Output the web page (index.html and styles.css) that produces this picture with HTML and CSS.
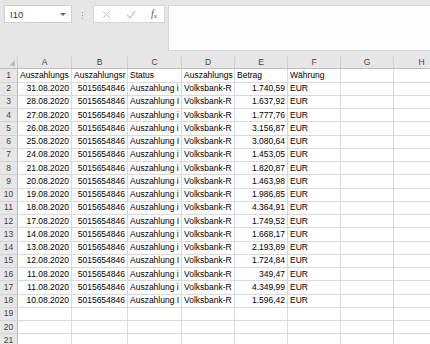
FILE: index.html
```html
<!DOCTYPE html>
<html lang="de">
<head>
  <meta charset="UTF-8">
  <title>Auszahlungen</title>
  <link rel="stylesheet" href="styles.css">
</head>
<body>

<div class="toolbar">
  <div class="namebox">
    <span>I10</span>
    <span class="arrow"></span>
  </div>
  <div class="dots"><i></i><i></i><i></i></div>
  <div class="fxbox">
    <svg class="ico" width="9" height="9" viewBox="0 0 9 9"><path d="M1 1L8 8M8 1L1 8" stroke="#c8c8c8" stroke-width="1" fill="none"/></svg>
    <svg class="ico" width="10" height="9" viewBox="0 0 10 9"><path d="M1 5L4 8L9 1" stroke="#c8c8c8" stroke-width="1.3" fill="none"/></svg>
    <span class="fx">f<sub>x</sub></span>
  </div>
  <div class="formula"></div>
</div>

<div class="grid-wrap">
<table class="sheet">
  <colgroup>
    <col class="c-row"><col class="c-a"><col class="c-b"><col class="c-c"><col class="c-d"><col class="c-e"><col class="c-f"><col class="c-g"><col class="c-h">
  </colgroup>
  <tr class="head">
    <th class="corner"><span class="tri"></span></th><th>A</th><th>B</th><th>C</th><th>D</th><th>E</th><th>F</th><th>G</th><th>H</th>
  </tr>
  <tr><th>1</th><td>Auszahlungs</td><td>Auszahlungsr</td><td>Status</td><td>Auszahlungs</td><td>Betrag</td><td>Währung</td><td></td><td></td></tr>
  <tr><th>2</th><td class="r">31.08.2020</td><td class="r">5015654846</td><td>Auszahlung i</td><td>Volksbank-R</td><td class="r">1.740,59</td><td>EUR</td><td></td><td></td></tr>
  <tr><th>3</th><td class="r">28.08.2020</td><td class="r">5015654846</td><td>Auszahlung I</td><td>Volksbank-R</td><td class="r">1.637,92</td><td>EUR</td><td></td><td></td></tr>
  <tr><th>4</th><td class="r">27.08.2020</td><td class="r">5015654846</td><td>Auszahlung i</td><td>Volksbank-R</td><td class="r">1.777,76</td><td>EUR</td><td></td><td></td></tr>
  <tr><th>5</th><td class="r">26.08.2020</td><td class="r">5015654846</td><td>Auszahlung i</td><td>Volksbank-R</td><td class="r">3.156,87</td><td>EUR</td><td></td><td></td></tr>
  <tr><th>6</th><td class="r">25.08.2020</td><td class="r">5015654846</td><td>Auszahlung I</td><td>Volksbank-R</td><td class="r">3.080,64</td><td>EUR</td><td></td><td></td></tr>
  <tr><th>7</th><td class="r">24.08.2020</td><td class="r">5015654846</td><td>Auszahlung i</td><td>Volksbank-R</td><td class="r">1.453,05</td><td>EUR</td><td></td><td></td></tr>
  <tr><th>8</th><td class="r">21.08.2020</td><td class="r">5015654846</td><td>Auszahlung i</td><td>Volksbank-R</td><td class="r">1.820,87</td><td>EUR</td><td></td><td></td></tr>
  <tr><th>9</th><td class="r">20.08.2020</td><td class="r">5015654846</td><td>Auszahlung i</td><td>Volksbank-R</td><td class="r">1.463,98</td><td>EUR</td><td></td><td></td></tr>
  <tr><th>10</th><td class="r">19.08.2020</td><td class="r">5015654846</td><td>Auszahlung i</td><td>Volksbank-R</td><td class="r">1.986,85</td><td>EUR</td><td></td><td></td></tr>
  <tr><th>11</th><td class="r">18.08.2020</td><td class="r">5015654846</td><td>Auszahlung i</td><td>Volksbank-R</td><td class="r">4.364,91</td><td>EUR</td><td></td><td></td></tr>
  <tr><th>12</th><td class="r">17.08.2020</td><td class="r">5015654846</td><td>Auszahlung I</td><td>Volksbank-R</td><td class="r">1.749,52</td><td>EUR</td><td></td><td></td></tr>
  <tr><th>13</th><td class="r">14.08.2020</td><td class="r">5015654846</td><td>Auszahlung i</td><td>Volksbank-R</td><td class="r">1.668,17</td><td>EUR</td><td></td><td></td></tr>
  <tr><th>14</th><td class="r">13.08.2020</td><td class="r">5015654846</td><td>Auszahlung i</td><td>Volksbank-R</td><td class="r">2.193,89</td><td>EUR</td><td></td><td></td></tr>
  <tr><th>15</th><td class="r">12.08.2020</td><td class="r">5015654846</td><td>Auszahlung I</td><td>Volksbank-R</td><td class="r">1.724,84</td><td>EUR</td><td></td><td></td></tr>
  <tr><th>16</th><td class="r">11.08.2020</td><td class="r">5015654846</td><td>Auszahlung i</td><td>Volksbank-R</td><td class="r">349,47</td><td>EUR</td><td></td><td></td></tr>
  <tr><th>17</th><td class="r">11.08.2020</td><td class="r">5015654846</td><td>Auszahlung i</td><td>Volksbank-R</td><td class="r">4.349,99</td><td>EUR</td><td></td><td></td></tr>
  <tr><th>18</th><td class="r">10.08.2020</td><td class="r">5015654846</td><td>Auszahlung I</td><td>Volksbank-R</td><td class="r">1.596,42</td><td>EUR</td><td></td><td></td></tr>
  <tr><th>19</th><td></td><td></td><td></td><td></td><td></td><td></td><td></td><td></td></tr>
  <tr><th>20</th><td></td><td></td><td></td><td></td><td></td><td></td><td></td><td></td></tr>
  <tr><th>21</th><td></td><td></td><td></td><td></td><td></td><td></td><td></td><td></td></tr>
</table>
</div>

</body>
</html>
```

FILE: styles.css
```css
body {
  margin: 0;
  background: #fff;
  font-family: "Liberation Sans", Arial, sans-serif;
  overflow: hidden;
}
.toolbar {
  height: 56px;
  background: #e6e6e6;
  display: flex;
  align-items: flex-start;
  padding-top: 5px;
  box-sizing: border-box;
}
.namebox {
  margin-left: 4px;
  width: 68px;
  height: 18px;
  box-sizing: border-box;
  background: #fff;
  border: 1px solid #cfcfcf;
  display: flex;
  align-items: center;
  justify-content: space-between;
  padding: 0 5px 0 5px;
  font-size: 9.5px;
  color: #333;
}
.arrow {
  width: 0;
  height: 0;
  border-left: 3px solid transparent;
  border-right: 3px solid transparent;
  border-top: 3px solid #666;
}
.dots {
  width: 21px;
  display: flex;
  flex-direction: column;
  align-items: center;
  gap: 2px;
  padding-top: 7px;
}
.dots i {
  width: 1px;
  height: 1px;
  background: #999;
}
.fxbox {
  width: 72px;
  height: 18px;
  box-sizing: border-box;
  background: #fdfdfd;
  border: 1px solid #d6d6d6;
  display: flex;
  align-items: center;
  padding-left: 8px;
  gap: 15px;
}
.fx {
  font-family: "Liberation Serif", serif;
  font-style: italic;
  font-size: 10px;
  color: #555;
}
.fx sub {
  font-size: 7px;
  vertical-align: -1px;
}
.formula {
  margin-left: 3px;
  flex: 1;
  height: 44px;
  background: #fdfdfd;
  border: 1px solid #d6d6d6;
  border-right: none;
}

.grid-wrap {
  width: 430px;
  overflow: hidden;
}
.sheet {
  table-layout: fixed;
  border-collapse: separate;
  border-spacing: 0;
  width: 450px;
  font-size: 8.5px;
  color: #000;
}
.c-row { width: 18px; }
.c-a { width: 54px; }
.c-b { width: 56px; }
.c-c { width: 54px; }
.c-d { width: 53px; }
.c-e { width: 53px; }
.c-f { width: 53px; }
.c-g { width: 53px; }
.c-h { width: 56px; }
.sheet tr {
  height: 13.25px;
}
.sheet td, .sheet th {
  padding: 0 2px;
  line-height: 11px;
  white-space: nowrap;
  overflow: hidden;
  border-right: 1px solid #dadada;
  border-bottom: 1px solid #dadada;
  text-align: left;
  font-weight: normal;
}
.sheet td.r {
  text-align: right;
}
.sheet th {
  background: #e6e6e6;
  color: #444;
  text-align: center;
  border-right: 1px solid #c8c8c8;
  border-bottom: 1px solid #d4d4d4;
}
.sheet tr.head th {
  text-align: center;
  border-right: 1px solid #cfcfcf;
  border-bottom: 1px solid #bdbdbd;
}
.sheet tr:not(.head) th {
  border-right: 1px solid #bdbdbd;
}
.corner {
  position: relative;
}
.tri {
  position: absolute;
  right: 2px;
  bottom: 2px;
  width: 0;
  height: 0;
  border-left: 6px solid transparent;
  border-bottom: 6px solid #bbb;
}
```
